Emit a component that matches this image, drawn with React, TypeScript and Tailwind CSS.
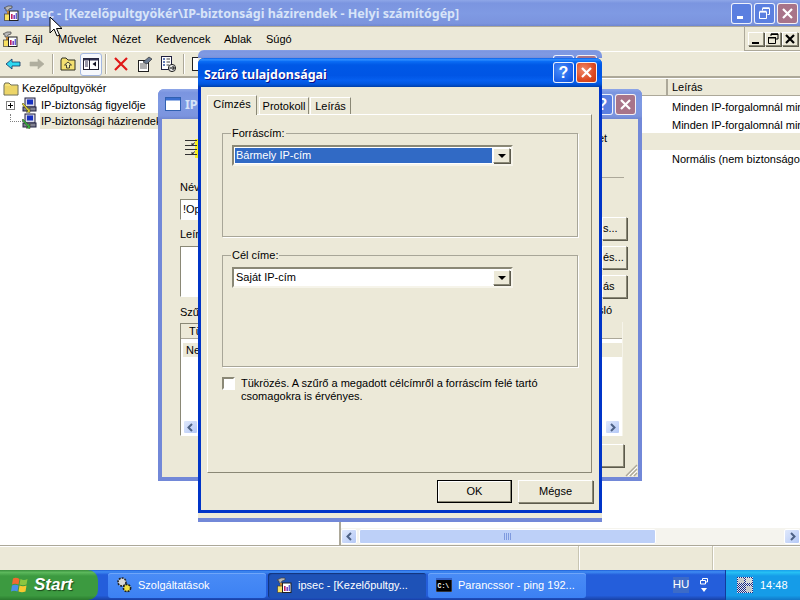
import React from "react";

const raised = "border border-t-white border-l-white border-r-[#8a8876] border-b-[#8a8876] bg-[#ece9d8] shadow-[1px_1px_0_#5c5a4c]";
const sunken = "border border-t-[#8a8876] border-l-[#8a8876] border-r-white border-b-white";
const inactiveTitle = "bg-[linear-gradient(180deg,#8ea6e8_0%,#7b95e0_12%,#7f9ae3_50%,#7b94de_90%,#6f86d0_100%)]";
const activeTitle = "bg-[linear-gradient(180deg,#0a5fe8_0%,#2f8eff_6%,#0a6cf5_12%,#0058e6_24%,#0055e5_60%,#0660f0_78%,#0256de_90%,#003fa8_100%)]";

function Mmc({ size = 16 }: { size?: number }) {
  return (
    <svg width={size} height={size} viewBox="0 0 16 16" className="shrink-0">
      <path d="M1 3 L5 1 L9 1 L9 3 L6 4 L5 6 L3 6 L3 4 Z" fill="#b8b8b8" stroke="#404040" strokeWidth="0.7" />
      <rect x="4" y="6" width="2" height="4" fill="#c08030" />
      <rect x="1.5" y="9" width="5" height="6.5" fill="#f8e060" stroke="#404040" strokeWidth="0.7" />
      <rect x="6.5" y="6" width="8.5" height="9.5" fill="#fff" stroke="#202020" />
      <rect x="8" y="9" width="1.6" height="5" fill="#c02060" />
      <rect x="10.4" y="10" width="1.6" height="4" fill="#8040c0" />
      <rect x="12.6" y="8" width="1.4" height="6" fill="#6060d0" />
    </svg>
  );
}

function Computer({ arrow }: { arrow: string }) {
  return (
    <svg width="16" height="16" viewBox="0 0 16 16" className="shrink-0">
      <rect x="4" y="1" width="10" height="9" fill="#d8d8e8" stroke="#202040" />
      <rect x="6" y="2.5" width="6" height="5" fill="#1830c0" />
      <rect x="2" y="10" width="13" height="4" fill="#808090" stroke="#202040" />
      <path d="M1 7 L7 14 L5 15 L9 15.5 L9 11 L8 12.5 L2 6 Z" fill={arrow} stroke="#303010" strokeWidth="0.5" />
    </svg>
  );
}

function FolderIcon() {
  return (
    <svg width="16" height="14" viewBox="0 0 16 14" className="shrink-0">
      <path d="M1 3 L1 13 L15 13 L15 3 L8 3 L6 1 L2 1 Z" fill="#f6e27a" stroke="#6a6a50" />
      <path d="M2 5 H14 M2 7 H14 M2 9 H14 M2 11 H14" stroke="#d8b840" strokeWidth="0.6" />
    </svg>
  );
}

function WinTitleBtn({ kind, inactive }: { kind: "min" | "max" | "close" | "help"; inactive?: boolean }) {
  const bg =
    kind === "close"
      ? inactive
        ? "bg-[#a87489]"
        : "bg-[radial-gradient(circle_at_35%_35%,#f08a6a,#dd4a22_60%,#c83810)]"
      : inactive
        ? "bg-[#5b7fe0]"
        : "bg-[radial-gradient(circle_at_35%_35%,#4a8cf8,#1a5fe8_70%,#0f4fd0)]";
  return (
    <div className={`w-[21px] h-[21px] rounded-[3px] border border-white/90 flex items-center justify-center shrink-0 ${bg}`}>
      <svg width="15" height="15" viewBox="0 0 15 15">
        {kind === "close" && <path d="M3 3 L12 12 M12 3 L3 12" stroke="#fff" strokeWidth="2.2" />}
        {kind === "min" && <rect x="3" y="10" width="6" height="3" fill="#fff" />}
        {kind === "max" && (
          <g fill="none" stroke="#fff" strokeWidth="1">
            <path d="M5.5 4.5 V2.5 H12.5 V8.5 H10.5" />
            <path d="M2.5 6 H9.5 V12.5 H2.5 Z" />
            <path d="M2.5 5.5 H9.5 M5.5 2 H12.5" strokeWidth="1.6" />
          </g>
        )}
        {kind === "help" && (
          <text x="7.5" y="13" textAnchor="middle" fill="#fff" fontSize="16" fontWeight="700" fontFamily="Liberation Sans">?</text>
        )}
      </svg>
    </div>
  );
}

function MdiBtn({ kind }: { kind: "min" | "max" | "close" }) {
  return (
    <div className={`w-[16px] h-[14px] flex items-center justify-center ${raised}`}>
      <svg width="12" height="12" viewBox="0 0 12 12">
        {kind === "min" && <rect x="2" y="9" width="7" height="2" fill="#000" />}
        {kind === "max" && (
          <g fill="none" stroke="#000">
            <path d="M4 3 V1 H11 V6 H9" />
            <path d="M1.5 4.5 H8.5 V10.5 H1.5 Z" />
            <path d="M1 4.7 H9 M4 1.3 H11" strokeWidth="1.5" />
          </g>
        )}
        {kind === "close" && <path d="M2 2 L10 10 M10 2 L2 10" stroke="#000" strokeWidth="2.2" />}
      </svg>
    </div>
  );
}

function ScrollBtn({ dir, small }: { dir: "l" | "r"; small?: boolean }) {
  return (
    <div className={`${small ? "w-[15px] h-[14px]" : "w-[16px] h-[15px]"} rounded-[2px] border border-white bg-[linear-gradient(135deg,#e0e9fc,#b4c8f6)] flex items-center justify-center shrink-0`}>
      <svg width="9" height="9" viewBox="0 0 9 9">
        <path d={dir === "l" ? "M6 1 L2.5 4.5 L6 8" : "M3 1 L6.5 4.5 L3 8"} fill="none" stroke="#4d6185" strokeWidth="2" />
      </svg>
    </div>
  );
}

function Combo({ text, selected }: { text: string; selected?: boolean }) {
  return (
    <div className={`w-[281px] h-[21px] bg-white flex items-center p-[1px] border-2 border-t-[#8a8876] border-l-[#8a8876] border-r-[#f6f4ea] border-b-[#f6f4ea]`}>
      <div className={`flex-1 h-full px-[1px] flex items-center ${selected ? "bg-[#316ac5] text-white" : "text-black"}`}>{text}</div>
      <div className={`w-[17px] h-[15px] flex items-center justify-center ml-[1px] ${raised}`}>
        <svg width="8" height="4" viewBox="0 0 8 4"><path d="M0 0 H8 L4 4 Z" fill="#000" /></svg>
      </div>
    </div>
  );
}

function Group({ label, h, children }: { label: string; h: string; children: React.ReactNode }) {
  return (
    <fieldset className={`border border-[#a8a698] shadow-[1px_1px_0_#fff] ${h} w-[356px] pl-[9px]`}>
      <legend className="-ml-[1px] px-[1px] leading-[11px] h-[11px]">{label}</legend>
      {children}
    </fieldset>
  );
}

function Btn({ children, def, className = "" }: { children?: React.ReactNode; def?: boolean; className?: string }) {
  return (
    <div className={`h-[23px] flex items-center justify-center ${def ? "border border-black bg-[#ece9d8] shadow-[inset_-1px_-1px_0_#8a8876,inset_1px_1px_0_#fff]" : raised} ${className}`}>
      {children}
    </div>
  );
}

function TbIcon({ children }: { children: React.ReactNode }) {
  return <svg width="16" height="16" viewBox="0 0 16 16" className="shrink-0">{children}</svg>;
}

function Sep() {
  return <div className="w-[1px] h-[20px] bg-[#aca899] shadow-[1px_0_0_#fff] shrink-0" />;
}

function Toolbar() {
  return (
    <div className="h-[26px] flex items-center pl-[5px] border-t border-t-white border-b border-b-[#aca899] bg-[#ece9d8]">
      <TbIcon><path d="M1 8 L7 3 V6 H15 V10 H7 V13 Z" fill="#30d8f0" stroke="#103060" strokeWidth="0.8" /></TbIcon>
      <div className="w-[8px]" />
      <TbIcon><path d="M15 8 L9 3 V6 H1 V10 H9 V13 Z" fill="#b0ae9e" stroke="#b0ae9e" strokeWidth="0.6" /></TbIcon>
      <div className="w-[7px]" />
      <Sep />
      <div className="w-[7px]" />
      <TbIcon>
        <path d="M1 4 V14 H15 V4 H8 L6 2 H2 Z" fill="#f4e070" stroke="#303020" />
        <path d="M8 6 L4.5 9 H6.5 V12 H9.5 V9 H11.5 Z" fill="#f8f0a0" stroke="#202020" strokeWidth="0.8" />
      </TbIcon>
      <div className="w-[4px]" />
      <div className="w-[22px] h-[23px] rounded-[3px] border border-[#a4b8e0] bg-[#f6f8fc] flex items-center justify-center">
        <TbIcon>
          <rect x="0.5" y="2.5" width="15" height="11" fill="#fff" stroke="#202030" />
          <rect x="0.5" y="2.5" width="15" height="2" fill="#303050" />
          <rect x="6" y="3" width="1" height="10" fill="#202030" />
          <path d="M2 6 H5 M2 8 H5 M2 10 H5" stroke="#303050" />
          <path d="M13 5.5 L9.5 8 L13 10.5 Z" fill="#101020" />
        </TbIcon>
      </div>
      <div className="w-[3px]" />
      <Sep />
      <div className="w-[7px]" />
      <TbIcon><path d="M2 2 L14 14 M14 2 L2 14" stroke="#e01818" strokeWidth="2.2" /></TbIcon>
      <div className="w-[8px]" />
      <TbIcon>
        <rect x="1.5" y="4.5" width="10" height="11" fill="#fff" stroke="#202020" />
        <path d="M3 8 H10 M3 10 H10 M3 12 H10" stroke="#606060" />
        <path d="M6 6 L12 1 L15 3 L10 8 Z" fill="#6a7a90" stroke="#202020" strokeWidth="0.6" />
      </TbIcon>
      <div className="w-[7px]" />
      <TbIcon>
        <rect x="1.5" y="0.5" width="10" height="13" fill="#fff" stroke="#202040" />
        <path d="M3 3 H5 M3 6 H5 M3 9 H5" stroke="#3050a0" strokeWidth="1.4" />
        <path d="M6.5 3 H10 M6.5 6 H10 M6.5 9 H9" stroke="#404040" />
        <circle cx="12" cy="12" r="3.6" fill="#e8e8e8" stroke="#202020" />
        <path d="M9.5 12 H14 M12.5 10 L14.5 12 L12.5 14" stroke="#000" fill="none" />
      </TbIcon>
      <div className="w-[7px]" />
      <Sep />
      <div className="w-[6px]" />
      <TbIcon><rect x="2.5" y="1.5" width="10" height="13" fill="#fff" stroke="#202020" /></TbIcon>
    </div>
  );
}

function MainWindow() {
  return (
    <div className="h-[570px] flex flex-col bg-[#ece9d8]">
      <div className={`h-[26px] flex items-center pl-[3px] pr-[2px] ${inactiveTitle}`}>
        <Mmc />
        <span className="ml-[3px] pt-[2px] font-bold text-[12.5px] text-[#d8e4f8] font-['Noto_Sans',sans-serif] whitespace-nowrap">
          ipsec - [Kezelőpultgyökér\IP-biztonsági házirendek - Helyi számítógép]
        </span>
        <div className="ml-auto flex gap-[2px]">
          <WinTitleBtn kind="min" inactive />
          <WinTitleBtn kind="max" inactive />
          <WinTitleBtn kind="close" inactive />
        </div>
      </div>
      <div className="h-[25px] flex items-center border-t border-t-[#aca899] relative">
        <div className="w-[22px] pl-[2px] flex"><Mmc /></div>
        <div className="flex">
          <span className="ml-[3px] w-[33px]">Fájl</span>
          <span className="w-[54px]">Művelet</span>
          <span className="w-[44px]">Nézet</span>
          <span className="w-[68px]">Kedvencek</span>
          <span className="w-[42px]">Ablak</span>
          <span>Súgó</span>
        </div>
        <div className="ml-auto h-full flex items-center gap-[1px] pl-[3px] pr-[2px] border-l border-l-[#aca899] border-b border-b-[#aca899]">
          <MdiBtn kind="min" />
          <MdiBtn kind="max" />
          <MdiBtn kind="close" />
        </div>
      </div>
      <Toolbar />
      <div className="flex-1 flex bg-white border-t border-t-[#aca899] min-h-0">
        <div className="w-[341px] shrink-0 pl-[3px] pt-[3px] border-r-2 border-r-[#aca899]">
          <div className="h-[15px] flex items-center gap-[3px]"><FolderIcon /><span>Kezelőpultgyökér</span></div>
          <div className="h-[16px] flex items-center mt-[1px]">
            <svg width="9" height="9" viewBox="0 0 9 9" className="ml-[3px] shrink-0">
              <rect x="0.5" y="0.5" width="8" height="8" fill="#fff" stroke="#808080" />
              <path d="M2 4.5 H7 M4.5 2 V7" stroke="#000" />
            </svg>
            <div className="w-[6px]" />
            <Computer arrow="#f0e030" />
            <span className="ml-[4px]">IP-biztonság figyelője</span>
          </div>
          <div className="h-[16px] flex items-center">
            <div className="w-[15px] h-[8px] ml-[7px] -mt-[7px] border-l border-b border-dotted border-[#808080]" />
            <div className="-ml-[4px]"><Computer arrow="#30c040" /></div>
            <span className="ml-[3px] pl-[1px] pr-[2px] bg-[#ece9d8] whitespace-nowrap">IP-biztonsági házirendek</span>
          </div>
        </div>
        <div className="flex-1 flex flex-col min-w-0">
          <div className="h-[17px] mt-[1px] flex bg-[#ece9d8] border-b border-b-[#aca899]">
            <div className="w-[327px] border-r-2 border-r-[#aca899]" />
            <span className="pl-[4px] leading-[16px]">Leírás</span>
          </div>
          <div className="flex-1 pl-[331px] pt-[3px] overflow-hidden whitespace-nowrap">
            <div className="h-[17px] leading-[17px] overflow-hidden">Minden IP-forgalomnál min</div>
            <div className="h-[17px] leading-[19px] overflow-hidden">Minden IP-forgalomnál min</div>
            <div className="h-[17px] -ml-[331px] bg-[#ece9d8]" />
            <div className="h-[17px] leading-[19px] overflow-hidden">Normális (nem biztonságos</div>
          </div>
          <div className="h-[17px] flex items-center bg-[#f5f4ee]">
            <ScrollBtn dir="l" />
            <div className="ml-[2px] w-[297px] h-[15px] rounded-[2px] border border-white bg-[#bdd0f8] flex items-center justify-center">
              <svg width="8" height="7" viewBox="0 0 8 7"><path d="M0.5 0 V7 M2.5 0 V7 M4.5 0 V7 M6.5 0 V7" stroke="#7f9adf" /></svg>
            </div>
            <div className="flex-1" />
            <ScrollBtn dir="r" />
          </div>
        </div>
      </div>
      <div className="h-[25px] flex border-t border-t-[#aca899] shadow-[inset_0_1px_0_#fff]">
        <div className="w-[578px]" />
        <div className="w-[134px] border-l border-l-[#c8c5b2] shadow-[inset_1px_0_0_#fff]" />
        <div className="flex-1 border-l border-l-[#c8c5b2] shadow-[inset_1px_0_0_#fff]" />
      </div>
    </div>
  );
}

function MidWindow() {
  return (
    <div className="absolute left-[158px] top-[89px] w-[484px] h-[392px] flex flex-col bg-[#7288d8] rounded-t-[6px] p-[4px] pt-0">
      <div className={`h-[30px] -mx-[4px] rounded-t-[6px] flex items-center pl-[7px] pr-[6px] shrink-0 ${inactiveTitle}`}>
        <svg width="16" height="14" viewBox="0 0 16 14"><rect x="0.5" y="0.5" width="15" height="13" fill="#fff" stroke="#3060b0" /><rect x="1" y="1" width="14" height="2.5" fill="#3a6ed0" /></svg>
        <span className="ml-[4px] pt-[2px] font-bold text-[12.5px] text-[#d8e4f8] font-['Noto_Sans',sans-serif]">IP</span>
        <div className="ml-auto flex gap-[2px]">
          <WinTitleBtn kind="help" inactive />
          <WinTitleBtn kind="close" inactive />
        </div>
      </div>
      <div className="flex-1 bg-[#ece9d8] flex relative">
        <div className="w-[174px] pl-[18px] shrink-0">
          <svg width="16" height="24" viewBox="0 0 16 24" className="mt-[17px] ml-[5px]">
            <rect x="10" y="3" width="6" height="19" fill="#f6ee20" />
            <path d="M0 4.5 H12 M0 9.5 H12 M0 13.5 H12 M0 18.5 H12" stroke="#303030" />
            <path d="M10 6.5 L7 9 M7 7 V9 H9 M10 15.5 L7 18 M7 16 V18 H9" stroke="#303030" fill="none" />
          </svg>
          <div className="mt-[21px] h-[13px] leading-[13px]">Név</div>
          <div className={`mt-[5px] h-[21px] bg-white ${sunken} pl-[2px] leading-[19px]`}>!Op</div>
          <div className="mt-[8px] h-[13px] leading-[13px]">Leír</div>
          <div className={`h-[51px] mt-[5px] bg-white ${sunken}`} />
          <div className="mt-[9px] h-[13px] leading-[13px]">Szű</div>
          <div className={`h-[113px] mt-[4px] bg-white ${sunken}`}>
            <div className="h-[15px] bg-[#ece9d8] border-b border-b-[#aca899] pl-[8px] leading-[14px]">Tü</div>
            <div className="mt-[4px] h-[14px] bg-[#ece9d8] pl-[3px] ml-[2px] leading-[14px]">Ne</div>
            <div className="mt-[63px] pl-[2px]"><ScrollBtn dir="l" small /></div>
          </div>
        </div>
        <div className="flex-1" />
        <div className="w-[40px] shrink-0 pr-[11px] flex flex-col items-end text-left">
          <div className="mt-[13px] h-[13px] leading-[13px] w-full">et</div>
          <div className="mt-[32px] h-[1px] w-[22px] mr-[3px] bg-[#aca899]" />
          <Btn className="w-[25px] mt-[39px] !justify-start">s...</Btn>
          <Btn className="w-[25px] mt-[6px] !justify-start">és...</Btn>
          <Btn className="w-[25px] mt-[6px] !justify-start">ás</Btn>
          <div className="mt-[6px] h-[13px] leading-[13px] w-full">sló</div>
          <div className="w-[21px] h-[114px] mt-[5px] mr-[4px] bg-white border-r border-r-[#f6f4ea] flex flex-col">
            <div className="h-[17px] bg-[#ece9d8] border-b border-b-[#aca899]" />
            <div className="mt-[4px] h-[14px] bg-[#ece9d8]" />
            <div className="mt-[63px] flex justify-end pr-[2px]"><ScrollBtn dir="r" small /></div>
          </div>
          <Btn className="w-[25px] mt-[8px] mr-[3px]" />
        </div>
        <svg width="14" height="14" viewBox="0 0 14 14" className="absolute right-0 bottom-0">
          <path d="M13 2 L2 13 M13 6 L6 13 M13 10 L10 13" stroke="#aca899" strokeWidth="1.4" />
          <path d="M13 4 L4 13 M13 8 L8 13" stroke="#fff" />
        </svg>
      </div>
    </div>
  );
}

function Dialog() {
  return (
    <div className="absolute left-[198px] top-[50px] w-[404px] h-[472px] flex flex-col rounded-t-[6px] bg-[#ece9d8] border-b-[4px] border-b-[#7288d8]">
      <div className={`h-[8px] rounded-t-[6px] overflow-hidden flex justify-end pr-[5px] pt-[5px] gap-[2px] ${inactiveTitle}`}>
        <div className="w-[21px] h-[21px] rounded-[3px] border border-white/90 bg-[#5b7fe0] shrink-0" />
        <div className="w-[21px] h-[21px] rounded-[3px] border border-white/90 bg-[#a87489] shrink-0" />
      </div>
      <div className="h-[455px] flex flex-col bg-[#ece9d8] border-x-[3px] border-b-[3px] border-[#0034c8] rounded-t-[6px]">
        <div className={`h-[29px] -mx-[3px] rounded-t-[6px] flex items-center pl-[6px] pr-[5px] ${activeTitle}`}>
          <span className="pt-[5px] font-bold text-[12.5px] text-white font-['Noto_Sans',sans-serif] [text-shadow:1px_1px_0_#0f1089]">Szűrő tulajdonságai</span>
          <div className="ml-auto flex gap-[2px]">
            <WinTitleBtn kind="help" />
            <WinTitleBtn kind="close" />
          </div>
        </div>
        <div className="flex-1 flex flex-col pl-[6px] pr-[6px] pt-[7px]">
          <div className="flex items-end h-[20px] relative z-10">
            <div className="h-[20px] w-[50px] mr-[2px] pb-[2px] flex items-center justify-center bg-[#ece9d8] border-t border-l border-t-white border-l-white border-r border-r-[#8a8876] -mb-[1px]">Címzés</div>
            <div className="h-[17px] w-[50px] mr-[1px] flex items-center justify-center border-t border-l border-t-white border-l-white border-r border-r-[#8a8876]">Protokoll</div>
            <div className="h-[17px] w-[41px] flex items-center justify-center border-t border-l border-t-white border-l-white border-r border-r-[#8a8876]">Leírás</div>
          </div>
          <div className="h-[359px] w-[385px] border border-t-white border-l-white border-r-[#8a8876] border-b-[#8a8876] pl-[14px] pt-[13px]">
            <Group label="Forráscím:" h="h-[109px]">
              <div className="pt-[6px]"><Combo text="Bármely IP-cím" selected /></div>
            </Group>
            <div className="h-[13px]" />
            <Group label="Cél címe:" h="h-[117px]">
              <div className="pt-[6px]"><Combo text="Saját IP-cím" /></div>
            </Group>
            <div className="flex mt-[10px] leading-[13px]">
              <div className={`w-[13px] h-[13px] shrink-0 bg-white ${sunken} border-2`} />
              <div className="ml-[6px] w-[300px]">Tükrözés. A szűrő a megadott célcímről a forráscím felé tartó csomagokra is érvényes.</div>
            </div>
          </div>
          <div className="flex justify-end gap-[6px] mt-[7px]">
            <Btn def className="w-[75px]">OK</Btn>
            <Btn className="w-[75px]">Mégse</Btn>
          </div>
        </div>
      </div>
    </div>
  );
}

function Task({ icon, label, active }: { icon: React.ReactNode; label: string; active?: boolean }) {
  return (
    <div className={`w-[158px] h-[25px] rounded-[3px] flex items-center pl-[8px] gap-[6px] text-white whitespace-nowrap overflow-hidden ${active ? "bg-[#1e52b7] shadow-[inset_1px_1px_1px_#12337a]" : "bg-[linear-gradient(180deg,#4a8cf6,#3c81f3)] shadow-[inset_0_1px_0_#6fa6fa]"}`}>
      {icon}
      <span>{label}</span>
    </div>
  );
}

function Taskbar() {
  return (
    <div className="h-[30px] flex items-center text-white bg-[linear-gradient(180deg,#1f5ed8_0%,#3f8cf3_6%,#245edb_16%,#245edb_85%,#1941a5_100%)]">
      <div className="w-[98px] h-full rounded-r-[10px] flex items-center pl-[11px] bg-[linear-gradient(180deg,#388e3c_0%,#5cb85c_8%,#3c9a40_20%,#3c9a40_85%,#2a7a2e_100%)]">
        <svg width="18" height="18" viewBox="0 0 18 18" className="shrink-0">
          <path d="M2 2.5 Q5 1 8.5 3 L7.5 8.5 Q4 7 1 8.5 Z" fill="#f06a30" />
          <path d="M9.5 3 Q13 5 16.5 3 L15.5 8.5 Q12 10 8.5 8.5 Z" fill="#8cc640" />
          <path d="M1 9.5 Q4 8 7.5 9.5 L6.5 15.5 Q3 14 0 15.5 Z" fill="#4a90e8" />
          <path d="M8.5 9.5 Q12 11 15.5 9.5 L14.5 15.5 Q11 17 7.5 15.5 Z" fill="#f8c830" />
        </svg>
        <span className="ml-[5px] text-[17px] font-bold italic font-['Liberation_Sans',sans-serif] [text-shadow:1px_1px_1px_#1a4a1a]">Start</span>
      </div>
      <div className="flex gap-[2px] ml-[10px]">
        <Task label="Szolgáltatások" icon={
          <svg width="16" height="16" viewBox="0 0 16 16" className="shrink-0">
            <circle cx="6" cy="5" r="4" fill="#d8d8d8" stroke="#202020" strokeDasharray="2 1" strokeWidth="1.6" />
            <circle cx="11" cy="11" r="3.6" fill="#f0e040" stroke="#202020" strokeDasharray="2 1" strokeWidth="1.6" />
          </svg>} />
        <Task active label="ipsec - [Kezelőpultgy..." icon={<Mmc />} />
        <Task label="Parancssor - ping 192..." icon={
          <svg width="16" height="14" viewBox="0 0 16 14" className="shrink-0">
            <rect width="16" height="14" fill="#000" stroke="#c0c8e0" strokeWidth="0.5" />
            <rect width="16" height="2" fill="#3060c8" />
            <text x="1.5" y="9.5" fill="#fff" fontSize="6.5" fontWeight="700" fontFamily="Liberation Mono">C:\</text>
          </svg>} />
      </div>
      <div className="ml-[87px] w-[16px] h-[16px] bg-[#3c6bc8] flex items-center justify-center text-[11.5px]">HU</div>
      <div className="ml-[8px] w-[14px] flex flex-col items-center gap-[3px]">
        <svg width="8" height="7" viewBox="0 0 8 7"><path d="M2.5 2 V0.5 H7.5 V4 H6 M0.5 2.5 H5.5 V6 H0.5 Z" fill="none" stroke="#fff" /></svg>
        <svg width="6" height="4" viewBox="0 0 6 4"><path d="M0 0 H6 L3 4 Z" fill="#fff" /></svg>
      </div>
      <div className="ml-auto w-[75px] h-full flex items-center pl-[11px] border-l border-l-[#123a9c] bg-[linear-gradient(180deg,#18a0ec_0%,#26c0f4_8%,#159ce8_20%,#159ce8_85%,#1178c8_100%)]">
        <svg width="16" height="16" viewBox="0 0 16 16" className="shrink-0">
          <defs>
            <pattern id="chk" width="2" height="2" patternUnits="userSpaceOnUse">
              <rect width="2" height="2" fill="#e8e8f0" />
              <rect width="1" height="1" fill="#1a2a80" />
              <rect x="1" y="1" width="1" height="1" fill="#1a2a80" />
            </pattern>
          </defs>
          <rect width="16" height="16" fill="url(#chk)" />
          <rect x="1" y="1" width="6" height="5" fill="#c8c8c8" />
          <rect x="9" y="1" width="6" height="5" fill="#d8d8d8" />
          <rect x="9" y="9" width="6" height="6" fill="#c8c8c8" />
        </svg>
        <span className="ml-[7px]">14:48</span>
      </div>
    </div>
  );
}

export default function App() {
  return (
    <div className="relative w-[800px] h-[600px] overflow-hidden bg-[#ece9d8] text-black text-[11px] font-['Liberation_Sans',sans-serif]">
      <MainWindow />
      <Taskbar />
      <MidWindow />
      <Dialog />
      <svg width="14" height="22" viewBox="0 0 14 22" className="absolute left-[49px] top-[16px]">
        <path d="M1 1 V17 L5 13 L8 20 L10.5 19 L7.5 12.5 L13 12.5 Z" fill="#fff" stroke="#000" />
      </svg>
    </div>
  );
}
